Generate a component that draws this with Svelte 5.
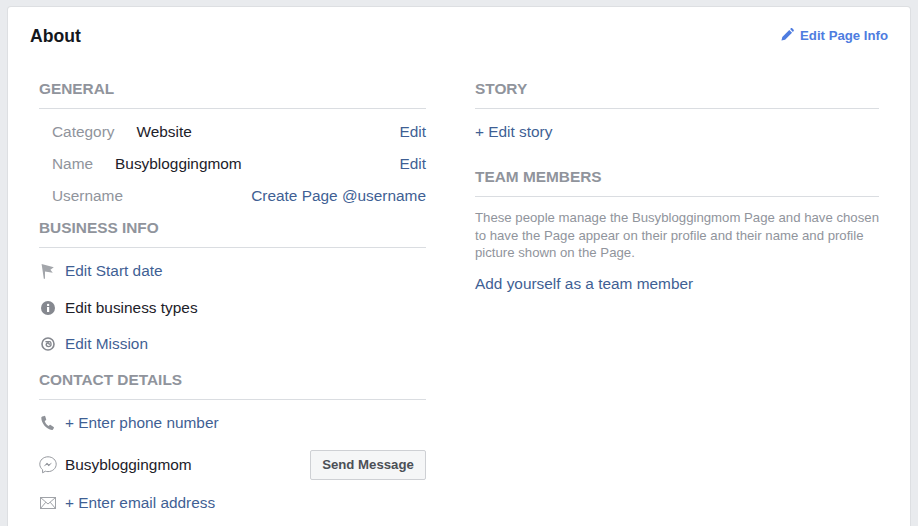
<script>
  const general = [
    { label: 'Category', value: 'Website', link: 'Edit' },
    { label: 'Name', value: 'Busybloggingmom', link: 'Edit' },
    { label: 'Username', value: '', link: 'Create Page @username' }
  ];
</script>

<div class="page">
  <section class="card">
    <header class="head">
      <h1>About</h1>
      <a class="edit-info" href="#top">
        <svg class="pencil" width="13" height="13" viewBox="0 0 14 14"><path fill="#4e7ce0" d="M0.5 13.5 1.4 9.6 8.9 2.1 11.9 5.1 4.4 12.6ZM9.8 1.2 10.7 0.4C11.1 0 11.7 0 12.1 0.4L13.6 1.9C14 2.3 14 2.9 13.6 3.3L12.8 4.2Z"/></svg>
        Edit Page Info
      </a>
    </header>
    <div class="cols">
      <div class="left">
        <h2>GENERAL</h2>
        <div class="general">
          {#each general as g}
            <div class="grow">
              <span class="label">{g.label}</span>
              <span class="val">{g.value}</span>
              <a href="#top">{g.link}</a>
            </div>
          {/each}
        </div>

        <h2 class="biz">BUSINESS INFO</h2>
        <div class="list">
          <div class="row">
            <svg class="ico" width="16" height="16" viewBox="0 0 16 16"><path fill="#a3a6ab" d="M1.6 1 13.8 4.2 10.4 6.8 12.8 9.8 5 8.6 5 15.8 3.8 15.8Z"/></svg>
            <a href="#top">Edit Start date</a>
          </div>
          <div class="row">
            <svg class="ico" width="16" height="16" viewBox="0 0 16 16"><circle cx="8" cy="8" r="7" fill="#85888f"/><rect x="7" y="7" width="2.2" height="5" fill="#fff"/><circle cx="8.1" cy="4.9" r="1.2" fill="#fff"/></svg>
            <span class="dark">Edit business types</span>
          </div>
          <div class="row">
            <svg class="ico" width="16" height="16" viewBox="0 0 16 16" fill="none" stroke="#85888f"><circle cx="8" cy="8" r="6" stroke-width="1.6"/><path stroke-width="1.4" d="M5.4 5.6 9.8 5.6C11 5.6 11 8 11 8.6 11 10.4 9.6 10.6 8.6 10.6 7 10.6 6.2 9.8 6.2 8.6 6.2 7.6 7 7 8 7 9 7 9.4 7.8 9.2 8.8"/></svg>
            <a href="#top">Edit Mission</a>
          </div>
        </div>

        <h2 class="contact">CONTACT DETAILS</h2>
        <div class="list">
          <div class="row phone">
            <svg class="ico" width="16" height="16" viewBox="0 0 16 16"><path fill="#8f9298" d="M2.2 1.6 4.4 0.9C4.9 0.8 5.2 1 5.3 1.4L6.2 4.4C6.3 4.8 6.2 5 5.9 5.2L4.7 6C5.1 7.6 6.5 9.9 8.6 10.9L9.7 10C10 9.8 10.3 9.8 10.6 10L13.6 12C14 12.3 14.1 12.6 13.9 13L13 14.5C12.8 14.9 12.4 15 12 15 6.5 14.6 1.2 8.4 1.3 2.6 1.3 2.1 1.7 1.8 2.2 1.6Z"/></svg>
            <a href="#top">+ Enter phone number</a>
          </div>
          <div class="row messenger">
            <svg class="ico big" width="18" height="18" viewBox="0 0 18 18" fill="none"><path stroke="#95989e" d="M9 0.8C4.4 0.8 0.8 4.1 0.8 8.2 0.8 10.5 1.9 12.4 3.6 13.7L3.6 16.8 6.4 15.2C7.2 15.5 8.1 15.6 9 15.6 13.6 15.6 17.2 12.3 17.2 8.2 17.2 4.1 13.6 0.8 9 0.8Z"/><path fill="#85888f" d="M4.6 10.4 8 6.8 9.8 8.5 13.2 6.6 9.8 10.3 8.1 8.6Z"/></svg>
            <span class="dark">Busybloggingmom</span>
            <button type="button">Send Message</button>
          </div>
          <div class="row mail">
            <svg class="ico big" width="18" height="18" viewBox="0 0 18 18" fill="none" stroke="#a0a3a8"><rect x="1.5" y="3.5" width="15" height="11"/><path d="M1.5 3.5 9 10 16.5 3.5M1.5 14.5 6.8 8.2M16.5 14.5 11.2 8.2"/></svg>
            <a href="#top">+ Enter email address</a>
          </div>
        </div>
      </div>

      <div class="right">
        <h2>STORY</h2>
        <div class="story"><a href="#top">+ Edit story</a></div>
        <h2 class="team">TEAM MEMBERS</h2>
        <p>These people manage the Busybloggingmom Page and have chosen to have the Page appear on their profile and their name and profile picture shown on the Page.</p>
        <a class="add" href="#top">Add yourself as a team member</a>
      </div>
    </div>
  </section>
</div>

<style>
  :global(body) { margin: 0; background: #e9ebee; }
  .page {
    height: 526px;
    overflow: hidden;
    padding: 7px 8px 0;
    box-sizing: border-box;
    font-family: "Liberation Sans", Arial, sans-serif;
    font-size: 15.4px;
    color: #1d2129;
  }
  .card {
    background: #fff;
    border-radius: 3px;
    height: 560px;
    box-shadow: 0 0 0 1px #dddfe2;
  }
  .head {
    display: flex;
    justify-content: space-between;
    align-items: center;
    height: 56px;
    padding: 0 22px;
  }
  h1 { margin: 2px 0 0; font-size: 17.6px; font-weight: 700; color: #14171c; }
  .edit-info {
    display: flex;
    align-items: center;
    gap: 6px;
    font-weight: 700;
    font-size: 13.2px;
    color: #4e7ce0;
  }
  .pencil { margin-top: -2px; }
  a { color: #3f5f94; text-decoration: none; }
  .cols { display: flex; padding: 0 31px; gap: 49px; }
  .left { width: 387px; }
  .right { width: 404px; }
  h2 {
    margin: 0;
    height: 46px;
    box-sizing: border-box;
    padding-top: 17px;
    font-size: 15.4px;
    line-height: 18px;
    font-weight: 700;
    color: #90949c;
    border-bottom: 1px solid #dadde1;
  }
  .general { padding-top: 7px; }
  .grow {
    display: flex;
    align-items: center;
    height: 32px;
    padding-left: 13px;
  }
  .label { color: #90949c; margin-right: 22px; }
  .grow a { margin-left: auto; }
  .biz { margin-top: -10px; }
  .list { padding-top: 5px; }
  .row {
    display: flex;
    align-items: center;
    height: 36.5px;
  }
  .ico { margin-left: 1px; margin-right: 9px; flex: none; }
  .ico.big { margin-left: 0; margin-right: 8px; }
  .dark { color: #1d2129; }
  .contact { margin-top: -8.5px; }
  .phone { height: 36px; }
  .messenger { height: 48px; }
  .mail { height: 28px; }
  button {
    margin-left: auto;
    height: 30px;
    width: 116px;
    padding: 0 0 2px;
    border: 1px solid #ced0d4;
    border-radius: 2px;
    background: #f5f6f7;
    color: #4b4f56;
    font: 700 13.2px "Liberation Sans", Arial, sans-serif;
  }
  .story { height: 32px; padding-top: 7px; display: flex; align-items: center; }
  .team { margin-top: 3px; }
  p {
    margin: 12px 0 0;
    font-size: 13.2px;
    line-height: 17.6px;
    color: #90949c;
  }
  .add { display: block; margin-top: 13.5px; }
</style>
